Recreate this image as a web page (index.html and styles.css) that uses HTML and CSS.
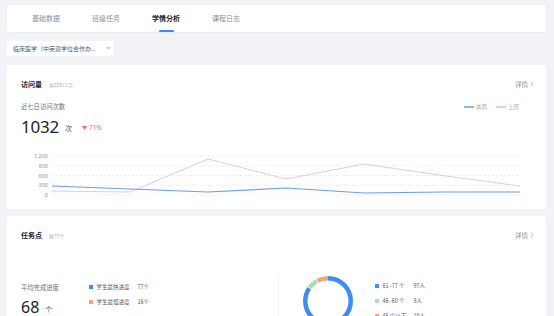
FILE: index.html
```html
<!DOCTYPE html>
<html lang="zh">
<head>
<meta charset="utf-8">
<link rel="stylesheet" href="styles.css">
</head>
<body>
<div class="page">
  <div class="tabs">
    <div class="tab"><span class="tab-text">基础数据</span><span class="tab-bar"></span></div>
    <div class="tab"><span class="tab-text">班级任务</span><span class="tab-bar"></span></div>
    <div class="tab active"><span class="tab-text">学情分析</span><span class="tab-bar"></span></div>
    <div class="tab"><span class="tab-text">课程日志</span><span class="tab-bar"></span></div>
  </div>

  <div class="select">
    <span class="select-text">临床医学（中英双学位合作办...</span>
    <svg class="caret" width="5" height="3" viewBox="0 0 5 3"><path d="M0 0H5L2.5 3Z" fill="#c9cdd4"/></svg>
  </div>

  <div class="card visits">
    <div class="card-head">
      <div class="head-left"><span class="card-title">访问量</span><span class="card-sub">共22611次</span></div>
      <div class="more">详情<svg width="4" height="6" viewBox="0 0 4 6"><path d="M0.8 0.6L3 3L0.8 5.4" fill="none" stroke="#a9aeb8" stroke-width="0.8"/></svg></div>
    </div>
    <div class="sub-row">
      <span class="label">近七日访问次数</span>
      <div class="legend">
        <span class="lg-item"><i class="lg-line blue"></i>本周</span>
        <span class="lg-item"><i class="lg-line pink"></i>上周</span>
      </div>
    </div>
    <div class="big-row">
      <span class="big-num">1032</span><span class="big-unit">次</span>
      <span class="trend"><svg width="5" height="4" viewBox="0 0 5 4"><path d="M0 0H5L2.5 4Z" fill="#e86a6a"/></svg>71%</span>
    </div>
    <svg class="chart" width="520" height="73" viewBox="0 0 520 73">
      <g font-family="Noto Sans, sans-serif" font-size="5.5" fill="#86909c" text-anchor="end">
        <text x="27" y="22">1,200</text>
        <text x="27" y="31.8">900</text>
        <text x="27" y="41.5">600</text>
        <text x="27" y="51.3">300</text>
        <text x="27" y="61">0</text>
      </g>
      <g stroke="#e5e6eb" stroke-width="0.8" stroke-dasharray="2 2">
        <line x1="31" y1="20" x2="499" y2="20"/>
        <line x1="31" y1="29.75" x2="499" y2="29.75"/>
        <line x1="31" y1="39.5" x2="499" y2="39.5"/>
        <line x1="31" y1="49.25" x2="499" y2="49.25"/>
        <line x1="31" y1="59" x2="499" y2="59"/>
      </g>
      <polyline fill="none" stroke="#e6c4f0" stroke-width="1" points="31,55 109,56 187,23 265,43 343,28 421,39.5 499,50"/>
      <polyline fill="none" stroke="#6b9de6" stroke-width="1.2" points="31,50 109,53 187,56 265,52 343,57 421,56 499,56"/>
    </svg>
  </div>

  <div class="card tasks">
    <div class="card-head">
      <div class="head-left"><span class="card-title">任务点</span><span class="card-sub">共77个</span></div>
      <div class="more">详情<svg width="4" height="6" viewBox="0 0 4 6"><path d="M0.8 0.6L3 3L0.8 5.4" fill="none" stroke="#a9aeb8" stroke-width="0.8"/></svg></div>
    </div>
    <div class="task-body">
      <div class="task-left">
        <div class="avg">
          <span class="label avg-label">平均完成进度</span>
          <div class="avg-num"><span class="num">68</span><span class="unit">个</span></div>
        </div>
        <div class="speed-list">
          <div class="speed-row"><i class="sq blue"></i><span class="s-name">学生最快进度</span><span class="s-val">77个</span></div>
          <div class="speed-row"><i class="sq orange"></i><span class="s-name">学生最慢进度</span><span class="s-val">16个</span></div>
        </div>
      </div>
      <div class="task-right">
        <svg class="donut" width="50" height="50" viewBox="0 0 50 50">
          <g transform="rotate(-90 25 25)" fill="none" stroke-width="4.5">
            <circle cx="25" cy="25" r="22.75" stroke="#3d8cf4" stroke-dasharray="120 143" stroke-dashoffset="0"/>
            <circle cx="25" cy="25" r="22.75" stroke="#a7e0b6" stroke-dasharray="9.5 143" stroke-dashoffset="-120.8"/>
            <circle cx="25" cy="25" r="22.75" stroke="#f5a47e" stroke-dasharray="11.8 143" stroke-dashoffset="-131.1"/>
          </g>
        </svg>
        <div class="dist-list">
          <div class="dist-row"><i class="sq blue"></i><span class="d-name">61~77 个</span><span class="d-val">97人</span></div>
          <div class="dist-row"><i class="sq green"></i><span class="d-name">46~60 个</span><span class="d-val">8人</span></div>
          <div class="dist-row"><i class="sq orange"></i><span class="d-name">46 个以下</span><span class="d-val">10人</span></div>
        </div>
      </div>
    </div>
  </div>
</div>
</body>
</html>
```

FILE: styles.css
```css
* { box-sizing: border-box; }
html, body { margin: 0; padding: 0; }
body {
  background: #f2f3f7;
  font-family: "Noto Sans", "Noto Sans CJK SC", sans-serif;
  color: #1d2129;
  overflow: hidden;
}
.page {
  padding: 5px 8px 0 7px;
  width: 554px;
}
.tabs {
  background: #fff;
  border-radius: 3px;
  height: 27px;
  display: flex;
  padding-left: 9px;
  box-shadow: 0 1px 2px rgba(0,0,0,0.03);
}
.tab {
  width: 60px;
  display: flex;
  flex-direction: column;
  align-items: center;
  padding-top: 8px;
}
.tab-text {
  font-family: "Noto Sans CJK SC", sans-serif;
  font-size: 7px;
  line-height: 10px;
  color: #86909c;
}
.tab-bar {
  margin-top: 7px;
  width: 15px;
  height: 2px;
  border-radius: 1px;
  background: transparent;
}
.tab.active .tab-text { color: #1d2129; font-weight: 700; }
.tab.active .tab-bar { background: #3f86f0; }

.select {
  margin-top: 9px;
  width: 107px;
  height: 15px;
  background: #fff;
  border-radius: 2px;
  display: flex;
  align-items: center;
  padding-left: 6px;
}
.select-text {
  font-family: "Noto Sans CJK SC", sans-serif;
  font-size: 6px;
  color: #4e5969;
  width: 93px;
}

.card {
  background: #fff;
  border-radius: 3px;
  margin-top: 9px;
  padding: 14px 12px 0 14px;
}
.visits { height: 144px; }
.tasks { margin-top: 7px; height: 130px; }

.card-head {
  display: flex;
  justify-content: space-between;
  align-items: center;
  height: 10px;
}
.head-left { display: flex; align-items: center; }
.card-title {
  font-family: "Noto Sans CJK SC", sans-serif;
  font-weight: 700;
  font-size: 7px;
  line-height: 10px;
  color: #1d2129;
}
.card-sub {
  font-family: "Noto Sans CJK SC", sans-serif;
  font-size: 5px;
  color: #a9aeb8;
  margin-left: 7px;
}
.more {
  font-family: "Noto Sans CJK SC", sans-serif;
  font-size: 6.5px;
  color: #86909c;
  display: flex;
  align-items: center;
  gap: 2px;
}

.sub-row {
  margin-top: 13px;
  height: 10px;
  display: flex;
  justify-content: space-between;
  align-items: center;
}
.label {
  font-family: "Noto Sans CJK SC", sans-serif;
  font-size: 6.3px;
  line-height: 10px;
  color: #6b7280;
}
.avg-label { display: block; height: 10px; }
.legend {
  display: flex;
  gap: 9px;
  margin-right: 15px;
}
.lg-item {
  display: flex;
  align-items: center;
  font-family: "Noto Sans CJK SC", sans-serif;
  font-size: 5.5px;
  color: #a9aeb8;
}
.lg-line {
  display: block;
  width: 10px;
  height: 1.5px;
  margin-right: 2px;
}
.lg-line.blue { background: #90b6ee; }
.lg-line.pink { background: #ecc8f2; }

.big-row {
  margin-top: 4px;
  height: 20px;
  display: flex;
  align-items: center;
}
.big-num {
  font-family: "Noto Sans", sans-serif;
  font-size: 17px;
  color: #1d2129;
  letter-spacing: -0.2px;
}
.big-unit {
  font-family: "Noto Sans CJK SC", sans-serif;
  font-size: 7px;
  color: #4e5969;
  margin-left: 6px;
  margin-top: 3px;
}
.trend {
  margin-left: 10px;
  margin-top: 3px;
  display: flex;
  align-items: center;
  gap: 2px;
  font-size: 6.5px;
  color: #e86a6a;
}
.chart { display: block; }

.task-body {
  margin-top: 34px;
  display: flex;
}
.task-left {
  width: 257px;
  display: flex;
  align-items: flex-start;
  padding-top: 9px;
}
.avg { width: 68px; }
.avg-num {
  margin-top: 5px;
  height: 18px;
  display: flex;
  align-items: center;
}
.num {
  font-family: "Noto Sans", sans-serif;
  font-size: 16px;
  color: #1d2129;
}
.unit {
  font-family: "Noto Sans CJK SC", sans-serif;
  font-size: 7px;
  color: #4e5969;
  margin-left: 6px;
  margin-top: 3px;
}
.speed-list {
  margin-top: -1px;
  display: flex;
  flex-direction: column;
  gap: 5px;
}
.speed-row, .dist-row {
  display: flex;
  align-items: center;
  height: 10px;
  font-family: "Noto Sans CJK SC", sans-serif;
  font-size: 5.5px;
  color: #4e5969;
}
.sq {
  display: block;
  width: 3.5px;
  height: 3.5px;
  margin-right: 4px;
}
.sq.blue { background: #3d8cf4; }
.sq.orange { background: #f5a47e; }
.sq.green { background: #a7e0b6; }
.s-name { width: 41px; }
.task-right {
  border-left: 1px solid #f0f1f4;
  display: flex;
  align-items: flex-start;
  padding-left: 24px;
  padding-top: 2px;
  height: 80px;
}
.donut { display: block; }
.dist-list {
  margin-left: 22px;
  padding-top: 5px;
  display: flex;
  flex-direction: column;
  gap: 5px;
}
.d-name { width: 31px; }
```
